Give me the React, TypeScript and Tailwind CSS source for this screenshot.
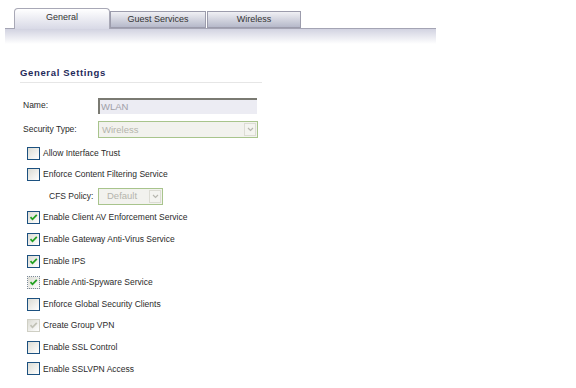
const rows: { label: string; checked?: boolean; disabled?: boolean; focus?: boolean }[] = [
  { label: 'Enable Client AV Enforcement Service', checked: true },
  { label: 'Enable Gateway Anti-Virus Service', checked: true },
  { label: 'Enable IPS', checked: true },
  { label: 'Enable Anti-Spyware Service', checked: true, focus: true },
  { label: 'Enforce Global Security Clients' },
  { label: 'Create Group VPN', checked: true, disabled: true },
  { label: 'Enable SSL Control' },
  { label: 'Enable SSLVPN Access' },
];

function Box({ checked, disabled, focus }: { checked?: boolean; disabled?: boolean; focus?: boolean }) {
  const border = disabled
    ? 'border-[#cfcfc4]'
    : focus
      ? 'border-dotted border-[#7b8a9a]'
      : 'border-[#1c5180]';
  return (
    <span
      className={`flex h-[13px] w-[13px] shrink-0 items-center justify-center border bg-gradient-to-br from-[#dcdcd4] to-white ${border}`}
    >
      {checked && (
        <svg width="9" height="9" viewBox="0 0 9 9">
          <path
            d="M1.5 4.2 L3.5 6.3 L7.8 1.8"
            fill="none"
            stroke={disabled ? '#c2c2b6' : '#21a121'}
            strokeWidth="1.8"
          />
        </svg>
      )}
    </span>
  );
}

function Row({ label, checked, disabled, focus }: { label: string; checked?: boolean; disabled?: boolean; focus?: boolean }) {
  return (
    <div className="flex h-[21.6px] items-center gap-[3px] pl-[7px]">
      <Box checked={checked} disabled={disabled} focus={focus} />
      <span className="text-[8.5px] text-[#2a2a2a]">{label}</span>
    </div>
  );
}

function Arrow() {
  return (
    <span className="flex h-[13px] w-[12px] items-center justify-center border border-[#dcdcd4] bg-[#f4f4f0]">
      <svg width="7" height="5" viewBox="0 0 7 5">
        <path d="M1 1 L3.5 3.5 L6 1" fill="none" stroke="#b8b8b0" strokeWidth="1.2" />
      </svg>
    </span>
  );
}

export default function App() {
  return (
    <div className="h-[388px] w-[576px] overflow-hidden bg-white font-['Liberation_Sans',Arial,sans-serif]">
      {/* Tab strip */}
      <div className="ml-[5px] w-[431px] pt-[8px]">
        <div className="relative z-10 -mb-px flex items-end pl-[9px]">
          <div className="flex h-[21px] w-[96px] items-center justify-center rounded-t-[4px] border border-b-0 border-[#a8a8b6] bg-gradient-to-b from-white to-[#d8d9e6] pb-[2px] text-[9px] text-[#333]">
            General
          </div>
          <div className="mb-px flex h-[17px] w-[96px] items-center justify-center border border-[#9c9cac] bg-gradient-to-b from-[#f0f0f4] to-[#b6b9ca] text-[9px] text-[#333]">
            Guest Services
          </div>
          <div className="mb-px ml-px flex h-[17px] w-[94px] items-center justify-center border border-[#9c9cac] bg-gradient-to-b from-[#f0f0f4] to-[#b6b9ca] text-[9px] text-[#333]">
            Wireless
          </div>
        </div>
        <div className="h-[16px] border-t border-[#a4a4b4] bg-gradient-to-b from-[#d2d3e1] to-white" />
      </div>

      {/* Settings */}
      <div className="pl-[20px] pt-[22px]">
        <div className="w-[242px] border-b border-[#e6e6e6] pb-[2px] text-[9.5px] font-bold tracking-[0.65px] text-[#1f2a5a]">
          General Settings
        </div>

        <div className="mt-[14px] flex h-[17px] items-center">
          <span className="w-[78px] pl-[3px] text-[8.5px] text-[#2a2a2a]">Name:</span>
          <div className="flex h-[16px] w-[159px] items-center border-l-2 border-t-2 border-[#7a7a72] bg-[#ececf3] pl-[1px] text-[9.5px] text-[#a0a0a8]">
            WLAN
          </div>
        </div>

        <div className="mt-[7px] flex h-[17px] items-center">
          <span className="w-[78px] pl-[3px] text-[8.5px] text-[#2a2a2a]">Security Type:</span>
          <div className="flex h-[17px] w-[160px] items-center justify-between border border-[#a8c48c] bg-[#f2f2ee] pl-[3px] pr-[1px] text-[9.5px] text-[#b4b4ac]">
            Wireless
            <Arrow />
          </div>
        </div>

        <div className="mt-[4px]">
          <Row label="Allow Interface Trust" />
          <Row label="Enforce Content Filtering Service" />
          <div className="flex h-[21.6px] items-center">
            <span className="w-[78px] pl-[29px] text-[8.5px] text-[#2a2a2a]">CFS Policy:</span>
            <div className="flex h-[17px] w-[65px] items-center justify-between border border-[#a8c48c] bg-[#f2f2ee] pl-[8px] pr-[1px] text-[9.5px] text-[#b4b4ac]">
              Default
              <Arrow />
            </div>
          </div>
          {rows.map((r) => (
            <Row key={r.label} {...r} />
          ))}
        </div>
      </div>
    </div>
  );
}
